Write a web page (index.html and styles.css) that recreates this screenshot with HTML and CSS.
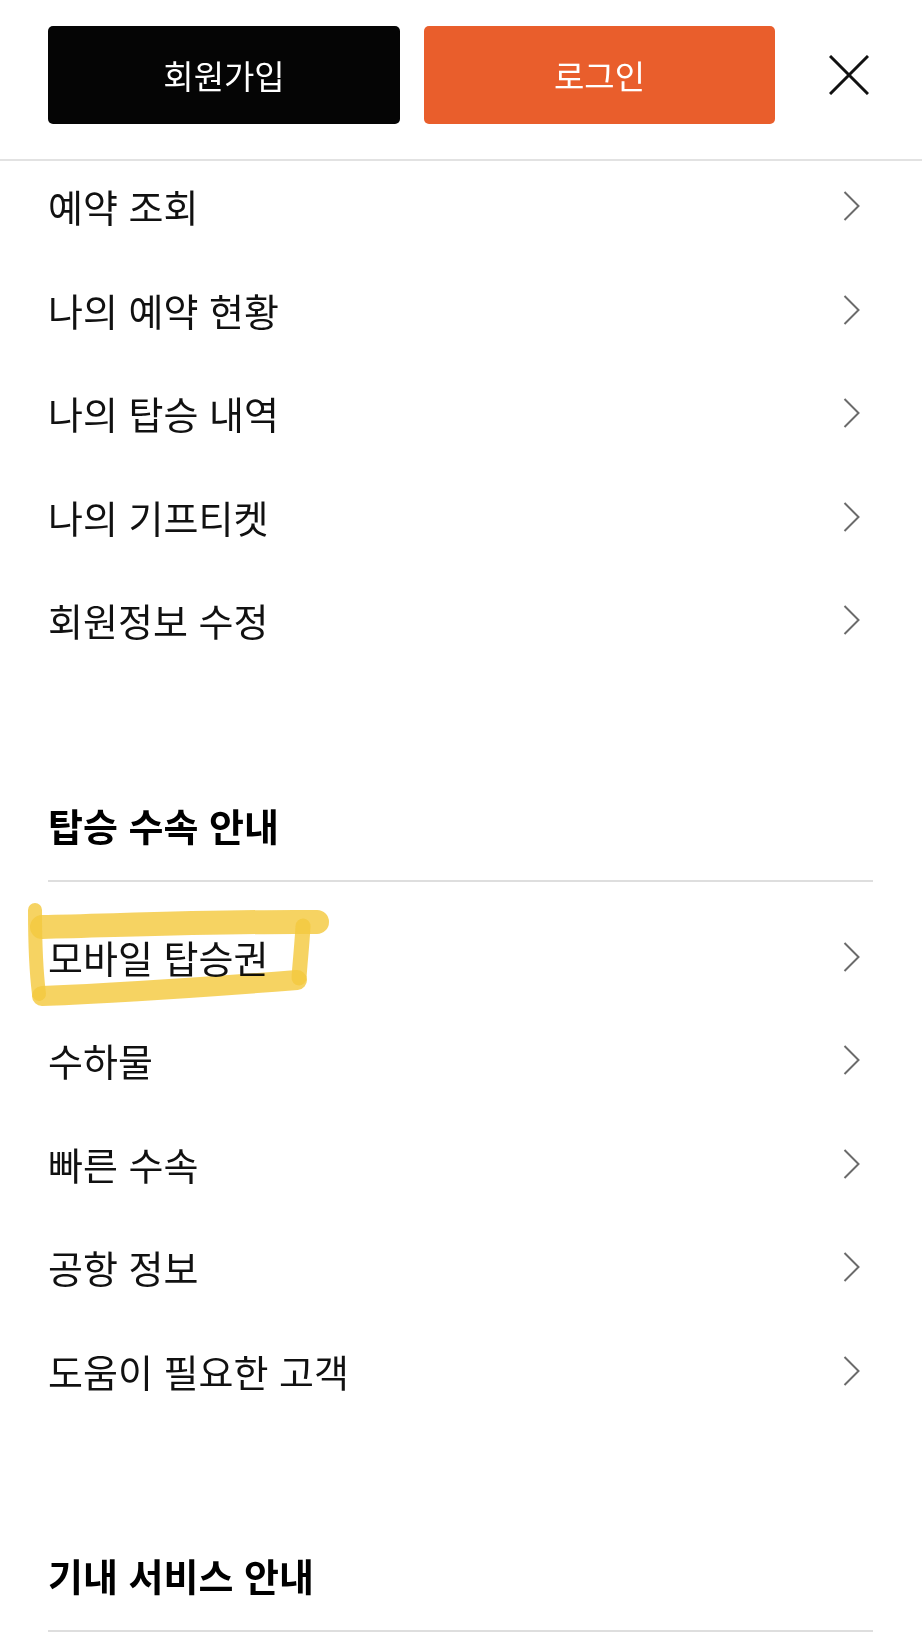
FILE: index.html
```html
<!DOCTYPE html>
<html lang="ko">
<head>
<meta charset="utf-8">
<title>메뉴</title>
<link rel="stylesheet" href="styles.css">
</head>
<body>
<div class="page">
  <header class="header">
    <button class="btn btn-join">회원가입</button>
    <button class="btn btn-login">로그인</button>
    <button class="close" aria-label="닫기">
      <svg width="40" height="40" viewBox="0 0 40 40"><path d="M1 1 L39 39 M39 1 L1 39" stroke="#111" stroke-width="3" fill="none"/></svg>
    </button>
  </header>

  <main class="menu">
    <ul class="list list-first">
      <li class="item"><span>예약 조회</span><svg class="chev" width="17" height="30" viewBox="0 0 17 30"><path d="M1.5 1 L15.5 15 L1.5 29" stroke="#6b6b6b" stroke-width="2" fill="none"/></svg></li>
      <li class="item"><span>나의 예약 현황</span><svg class="chev" width="17" height="30" viewBox="0 0 17 30"><path d="M1.5 1 L15.5 15 L1.5 29" stroke="#6b6b6b" stroke-width="2" fill="none"/></svg></li>
      <li class="item"><span>나의 탑승 내역</span><svg class="chev" width="17" height="30" viewBox="0 0 17 30"><path d="M1.5 1 L15.5 15 L1.5 29" stroke="#6b6b6b" stroke-width="2" fill="none"/></svg></li>
      <li class="item"><span>나의 기프티켓</span><svg class="chev" width="17" height="30" viewBox="0 0 17 30"><path d="M1.5 1 L15.5 15 L1.5 29" stroke="#6b6b6b" stroke-width="2" fill="none"/></svg></li>
      <li class="item"><span>회원정보 수정</span><svg class="chev" width="17" height="30" viewBox="0 0 17 30"><path d="M1.5 1 L15.5 15 L1.5 29" stroke="#6b6b6b" stroke-width="2" fill="none"/></svg></li>
    </ul>

    <h2 class="section-title">탑승 수속 안내</h2>
    <ul class="list">
      <li class="item"><span>모바일 탑승권</span><svg class="chev" width="17" height="30" viewBox="0 0 17 30"><path d="M1.5 1 L15.5 15 L1.5 29" stroke="#6b6b6b" stroke-width="2" fill="none"/></svg></li>
      <li class="item"><span>수하물</span><svg class="chev" width="17" height="30" viewBox="0 0 17 30"><path d="M1.5 1 L15.5 15 L1.5 29" stroke="#6b6b6b" stroke-width="2" fill="none"/></svg></li>
      <li class="item"><span>빠른 수속</span><svg class="chev" width="17" height="30" viewBox="0 0 17 30"><path d="M1.5 1 L15.5 15 L1.5 29" stroke="#6b6b6b" stroke-width="2" fill="none"/></svg></li>
      <li class="item"><span>공항 정보</span><svg class="chev" width="17" height="30" viewBox="0 0 17 30"><path d="M1.5 1 L15.5 15 L1.5 29" stroke="#6b6b6b" stroke-width="2" fill="none"/></svg></li>
      <li class="item"><span>도움이 필요한 고객</span><svg class="chev" width="17" height="30" viewBox="0 0 17 30"><path d="M1.5 1 L15.5 15 L1.5 29" stroke="#6b6b6b" stroke-width="2" fill="none"/></svg></li>
    </ul>

    <h2 class="section-title">기내 서비스 안내</h2>
  </main>

  <svg class="highlight" width="922" height="1641" viewBox="0 0 922 1641">
    <g fill="none" stroke="#f4c93f" stroke-linecap="round" stroke-opacity="0.82">
      <path d="M42 927 C130 925, 230 921, 317 922" stroke-width="24"/>
      <path d="M303 926 C302 945, 300 962, 299 978" stroke-width="15"/>
      <path d="M35 910 C35 940, 36 970, 39 994" stroke-width="14"/>
      <path d="M42 996 C120 993, 220 986, 297 980" stroke-width="20"/>
    </g>
  </svg>
</div>
</body>
</html>
```

FILE: styles.css
```css
* {
  box-sizing: border-box;
}

html, body {
  margin: 0;
  padding: 0;
  background: #ffffff;
}

body {
  font-family: "Noto Sans CJK KR", "Noto Sans", sans-serif;
  color: #111;
}

.page {
  position: relative;
  width: 922px;
  min-height: 1641px;
  overflow: hidden;
}

.header {
  display: flex;
  align-items: center;
  padding: 26px 0 35px 48px;
  border-bottom: 2px solid #e2e2e2;
}

.btn {
  height: 98px;
  border: none;
  border-radius: 5px;
  font-family: inherit;
  font-size: 33px;
  font-weight: 400;
  color: #ffffff;
  line-height: 1;
  padding: 0;
  cursor: pointer;
}

.btn-join {
  width: 352px;
  background: #050505;
}

.btn-login {
  width: 351px;
  margin-left: 24px;
  background: #e95e2c;
}

.close {
  margin-left: 54px;
  width: 40px;
  height: 40px;
  padding: 0;
  border: none;
  background: none;
  display: flex;
}

.menu {
  padding: 0 49px 0 48px;
}

.list {
  list-style: none;
  margin: 0;
  padding: 30px 0 0;
}

.list-first {
  padding-top: 0;
}

.item {
  display: flex;
  align-items: center;
  justify-content: space-between;
  height: 103.5px;
  padding: 23px 13px 36.5px 0;
  font-size: 38px;
  line-height: 44px;
  color: #111;
}

.chev {
  flex: none;
}

.section-title {
  margin: 124px 0 0;
  padding-bottom: 33px;
  border-bottom: 2px solid #dedede;
  font-size: 38px;
  line-height: 44px;
  font-weight: 700;
  color: #000;
}

.highlight {
  position: absolute;
  top: 0;
  left: 0;
  pointer-events: none;
  mix-blend-mode: multiply;
}
```
